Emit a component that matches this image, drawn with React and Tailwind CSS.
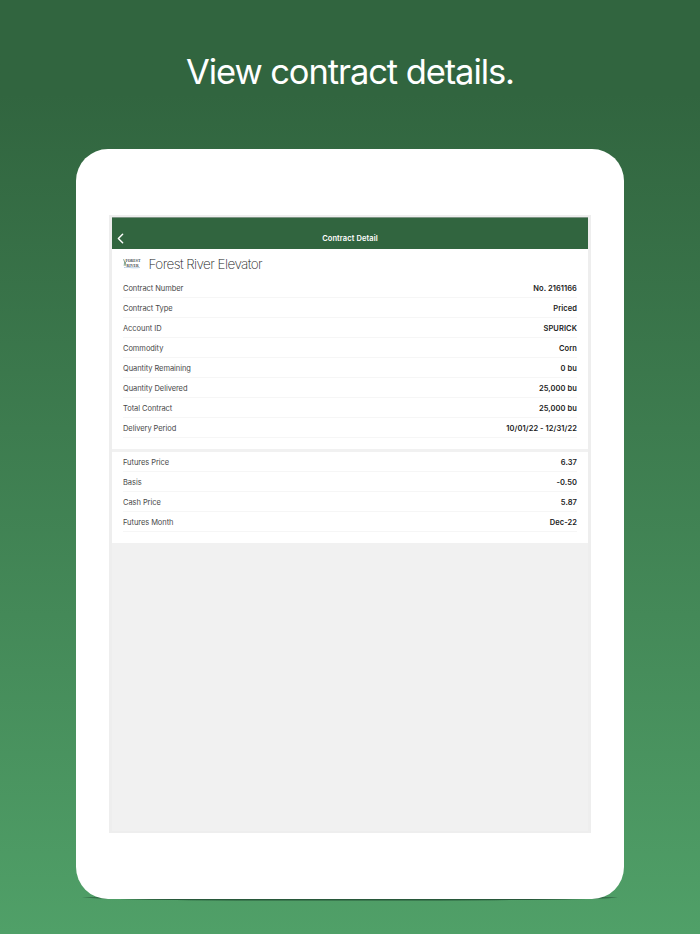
import { ChevronLeft } from 'lucide-react';

const contractRows = [
  { label: 'Contract Number', value: 'No. 2161166' },
  { label: 'Contract Type', value: 'Priced' },
  { label: 'Account ID', value: 'SPURICK' },
  { label: 'Commodity', value: 'Corn' },
  { label: 'Quantity Remaining', value: '0 bu' },
  { label: 'Quantity Delivered', value: '25,000 bu' },
  { label: 'Total Contract', value: '25,000 bu' },
  { label: 'Delivery Period', value: '10/01/22 - 12/31/22' },
];

const priceRows = [
  { label: 'Futures Price', value: '6.37' },
  { label: 'Basis', value: '-0.50' },
  { label: 'Cash Price', value: '5.87' },
  { label: 'Futures Month', value: 'Dec-22' },
];

const Logo = () => (
  <svg className="h-[11px] w-[18px] overflow-visible" viewBox="0 0 18 11">
    <g fontFamily="Liberation Serif, serif" fontWeight="bold" fontSize="4.9" fill="#3c4448">
      <text x="2.4" y="4.4" textLength="15" lengthAdjust="spacingAndGlyphs">FOREST</text>
      <text x="3.6" y="8.7" textLength="12" lengthAdjust="spacingAndGlyphs">RIVER</text>
    </g>
    <path d="M0.6 1.2 L1.6 4 L1.2 7.8 M2.4 4 L2.8 7.8" stroke="#4c7a5c" strokeWidth="0.7" fill="none" />
    <path d="M1 9.6 C5 8.6 8 10.6 17 9.5" stroke="#9dbbd8" strokeWidth="0.7" fill="none" />
  </svg>
);

const Rows = ({ rows }) => (
  <dl>
    {rows.map(({ label, value }) => (
      <div
        key={label}
        className="flex h-5 items-center justify-between border-b border-[#f6f6f6] pt-px text-[7.5px] leading-[9px]"
      >
        <dt className="font-normal tracking-[-0.06px] text-[#484848]">{label}</dt>
        <dd className="font-semibold tracking-[0.07px] text-[#222222]">{value}</dd>
      </div>
    ))}
  </dl>
);

const App = () => {
  return (
    <main className="flex h-[934px] w-[700px] flex-col items-center overflow-hidden bg-linear-to-b from-[#31653f] from-10% to-[#50a068] font-['Inter',sans-serif]">
      <h1 className="flex h-[149px] items-center pb-[4px] text-[34.5px] leading-none font-normal tracking-[-1.08px] text-white">
        View contract details.
      </h1>

      <div className="relative h-[750px] w-[548px] shrink-0">
        {/* Shadow under the tablet */}
        <svg className="absolute top-[746px] left-[6px] h-[6px] w-[536px]" viewBox="0 0 536 6">
          <path d="M0 2.4 Q268 -1 536 2.4 Q500 5.6 268 5.6 Q36 5.6 0 2.4Z" fill="#28583a" />
        </svg>

        <div className="relative h-full rounded-[32px] bg-white px-[33px] pt-[66px]">
          <div className="h-[618px] border-x-[3px] border-y-2 border-[#eeeeee] bg-[#f1f1f1]">
            <header className="grid h-8 grid-cols-3 items-center border-t border-[#7d9484] bg-[#31653f] pt-[9px] text-white">
              <ChevronLeft className="h-[17px] w-[17px]" strokeWidth={2.1} />
              <h2 className="pt-px text-center text-[7.5px] leading-[9px] font-semibold tracking-[0.1px]">Contract Detail</h2>
            </header>

            <section className="h-[200px] bg-white px-[11px]">
              <div className="flex h-[29px] items-center gap-[7.5px]">
                <Logo />
                <h3 className="pt-px text-[13.5px] leading-[15px] font-[250] tracking-[-0.57px] text-[#222222]">
                  Forest River Elevator
                </h3>
              </div>
              <Rows rows={contractRows} />
            </section>

            <section className="mt-[3px] h-[91px] bg-white px-[11px]">
              <Rows rows={priceRows} />
            </section>
          </div>
        </div>
      </div>
    </main>
  );
};

export default App;
